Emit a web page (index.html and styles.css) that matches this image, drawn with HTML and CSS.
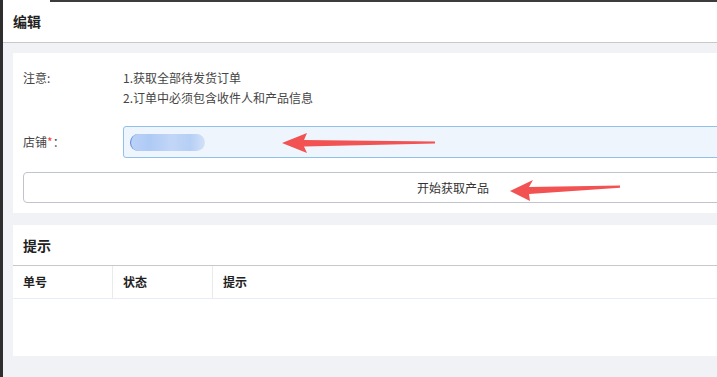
FILE: index.html
```html
<!DOCTYPE html>
<html lang="zh-CN">
<head>
  <meta charset="UTF-8">
  <title>编辑</title>
  <link rel="stylesheet" href="styles.css">
</head>
<body>
  <div class="modal">
    <div class="modal-header">编辑</div>

    <div class="modal-body">
      <!-- 表单 -->
      <div class="card form-card">
        <div class="form-row note-row">
          <span class="form-label">注意:</span>
          <div class="notes">
            <p>1.获取全部待发货订单</p>
            <p>2.订单中必须包含收件人和产品信息</p>
          </div>
        </div>

        <div class="form-row shop-row">
          <span class="form-label">店铺<em>*</em>：</span>
          <div class="shop-input"><span class="masked"></span></div>
        </div>

        <button class="fetch-btn">开始获取产品</button>

        <!-- 标注箭头 -->
        <svg class="arrow arrow-one" width="160" height="26" viewBox="0 0 160 26">
          <polygon points="2,12 27,2 24,9 155,10.5 155,12.6 24,15.5 27,22" fill="#f25252"/>
        </svg>
        <svg class="arrow arrow-two" width="116" height="26" viewBox="0 0 116 26">
          <polygon points="2,14 25,3 21,10 112,8.5 112,10.8 21,17 22,24" fill="#f25252"/>
        </svg>
      </div>

      <!-- 结果 -->
      <div class="card result-card">
        <div class="card-title">提示</div>
        <div class="table">
          <div class="table-head">
            <span class="col col-no">单号</span>
            <span class="col col-status">状态</span>
            <span class="col col-msg">提示</span>
          </div>
          <div class="table-empty"></div>
        </div>
      </div>
    </div>
  </div>
</body>
</html>
```

FILE: styles.css
```css
* {
  box-sizing: border-box;
  font-family: "Noto Sans CJK SC", "Noto Sans", sans-serif;
}
body {
  margin: 0;
  height: 377px;
  overflow: hidden;
  background: #2e2e2e;
  color: #333;
}

.modal {
  width: 900px;
  margin-left: 3px;
  background: #f0f2f5;
  height: 377px;
}
.modal-header {
  height: 43px;
  padding-left: 10px;
  line-height: 42px;
  font-size: 14px;
  font-weight: bold;
  color: #222;
  border-bottom: 1px solid #c8c8c8;
  background: linear-gradient(#3c3c3c, #3c3c3c) 47px 0 / 100% 2px no-repeat, #fff;
}

.modal-body {
  padding: 10px;
  display: flex;
  flex-direction: column;
  gap: 12px;
}
.card {
  background: #fff;
}

/* 表单 */
.form-card {
  position: relative;
  padding: 15px 10px 10px;
  font-size: 12px;
}
.form-row {
  display: flex;
}
.form-label {
  width: 100px;
  color: #444;
  line-height: 20px;
}
.form-label em {
  color: #f04040;
  font-style: normal;
}
.notes p {
  margin: 0;
  line-height: 20px;
  color: #444;
}
.shop-row {
  margin-top: 18px;
  align-items: center;
}
.shop-input {
  flex: 1;
  height: 32px;
  border: 1px solid #8fc1ea;
  border-radius: 3px;
  background: #eef5fd;
  padding: 0 6px;
  display: flex;
  align-items: center;
}
.masked {
  display: block;
  width: 75px;
  height: 17px;
  border-radius: 9px;
  background: linear-gradient(90deg, #bcd2f6 0%, #aecaf5 25%, #c2d6f7 55%, #b6cff5 80%, #d2e1f8 100%);
  border-left: 1px solid #5a86dc;
  filter: blur(0.4px);
}
.fetch-btn {
  display: block;
  width: 100%;
  height: 31px;
  margin-top: 14px;
  background: #fff;
  border: 1px solid #c0c4cc;
  border-radius: 4px;
  font-size: 12px;
  color: #333;
}

.arrow {
  position: absolute;
}
.arrow-one {
  left: 267px;
  top: 78px;
}
.arrow-two {
  left: 495px;
  top: 124px;
}

/* 结果表格 */
.result-card {
  height: 131px;
}
.card-title {
  height: 41px;
  padding-left: 10px;
  line-height: 40px;
  font-size: 14px;
  font-weight: bold;
  color: #222;
  border-bottom: 1px solid #c8c8c8;
}
.table-head {
  display: flex;
  height: 33px;
  border-bottom: 1px solid #e6edf5;
}
.col {
  padding-left: 10px;
  line-height: 32px;
  font-size: 12px;
  font-weight: bold;
  color: #222;
}
.col-no,
.col-status {
  width: 100px;
  border-right: 1px solid #e8eaec;
}
.col-msg {
  flex: 1;
}
```
